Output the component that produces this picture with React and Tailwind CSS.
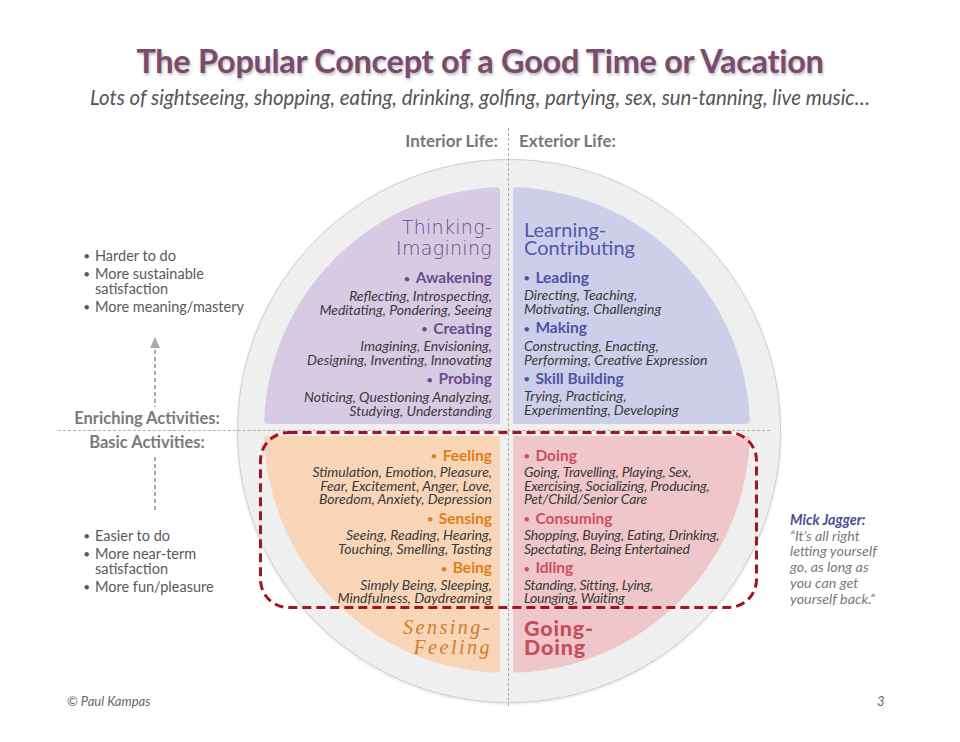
const descColor = "text-[#3a3a3a]";

function Item({ head, lines, color, first, tight, narrow }) {
  const headGap = first ? "" : tight ? "mt-[4px]" : "mt-[3px]";
  return (
    <>
      <div className={`text-[15.5px] leading-[17px] font-bold ${color} ${headGap}`}>
        <span className="text-[9px] align-middle mr-[6px] relative -top-[1px]">●</span>
        {head}
      </div>
      <div
        className={`text-[14px] italic ${descColor} ${tight ? "leading-[13.5px]" : "leading-[14px] mt-[1px]"} ${narrow ? "tracking-[-0.2px]" : ""}`}
      >
        {lines.map((l) => (
          <div key={l}>{l}</div>
        ))}
      </div>
    </>
  );
}

function Bullets({ items }) {
  return (
    <ul className="text-[14.5px] leading-[15px] text-[#595959] space-y-[3px]">
      {items.map((it) => (
        <li key={it[0]} className="flex">
          <span className="w-[11px] shrink-0 text-[9px] leading-[15px]">●</span>
          <span>
            {it.map((l) => (
              <div key={l}>{l}</div>
            ))}
          </span>
        </li>
      ))}
    </ul>
  );
}

export default function App() {
  return (
    <div className="relative w-[960px] h-[742px] bg-white overflow-hidden font-['Lato',sans-serif]">
      {/* heading */}
      <div className="pt-[41px] text-center">
        <h1 className="text-[32.5px] leading-[40px] font-bold text-[#7b4b6e] tracking-[-0.3px] [text-shadow:1px_2px_3px_rgba(0,0,0,0.28)]">
          The Popular Concept of a Good Time or Vacation
        </h1>
        <p className="mt-[3px] text-[20.4px] leading-[26px] italic text-[#555]">
          Lots of sightseeing, shopping, eating, drinking, golfing, partying, sex, sun-tanning, live music…
        </p>
      </div>

      {/* diagram canvas */}
      <div className="absolute inset-0">
        {/* outer ring */}
        <div className="absolute left-[237px] top-[159px] w-[544px] h-[544px] rounded-full bg-[#efefef] border-[1.5px] border-[#d0d0d0] shadow-[0_1px_3px_rgba(0,0,0,0.12)]" />

        {/* axis lines */}
        <div className="absolute left-[58px] top-[430px] w-[712px] border-t border-dashed border-[#b0b0b0]" />
        <div className="absolute left-[508px] top-[128px] h-[578px] border-l border-dashed border-[#a8a8a8]" />

        {/* quadrants */}
        <div className="absolute left-[264px] top-[187px] w-[486px] h-[486px] rounded-full overflow-hidden grid grid-cols-[236px_237px] grid-rows-[237px_237px] gap-x-[13px] gap-y-[12px]">
          <div className="bg-[#d6cbe3] rounded-tr-[4px] rounded-bl-[4px] flex flex-col items-end text-right pr-[8px] pt-[30px]">
            <div className="font-['DejaVu_Sans',sans-serif] font-extralight text-[19px] leading-[21px] text-[#6a4c8c] tracking-[0.3px]">
              <div>Thinking-</div>
              <div>Imagining</div>
            </div>
            <div className="mt-[10px]" />
            <Item first color="text-[#6b4b8f]" head="Awakening" lines={["Reflecting, Introspecting,", "Meditating, Pondering, Seeing"]} />
            <Item color="text-[#6b4b8f]" head="Creating" lines={["Imagining, Envisioning,", "Designing, Inventing, Innovating"]} />
            <Item color="text-[#6b4b8f]" head="Probing" lines={["Noticing, Questioning Analyzing,", "Studying, Understanding"]} />
          </div>

          <div className="bg-[#cdcfea] rounded-tl-[4px] rounded-br-[4px] flex flex-col pl-[11px] pt-[33px]">
            <div className="text-[20px] leading-[18px] text-[#5457a8]">
              <div>Learning-</div>
              <div>Contributing</div>
            </div>
            <div className="mt-[12.5px]" />
            <Item first color="text-[#4f52a6]" head="Leading" lines={["Directing, Teaching,", "Motivating, Challenging"]} />
            <Item color="text-[#4f52a6]" head="Making" lines={["Constructing, Enacting,", "Performing, Creative Expression"]} />
            <Item color="text-[#4f52a6]" head="Skill Building" lines={["Trying, Practicing,", "Experimenting, Developing"]} />
          </div>

          <div className="bg-[#f7d5b6] rounded-br-[4px] rounded-tl-[4px] flex flex-col items-end text-right pr-[8px] pt-[10.5px]">
            <Item first tight color="text-[#e07e18]" head="Feeling" lines={["Stimulation, Emotion, Pleasure,", "Fear, Excitement, Anger, Love,", "Boredom, Anxiety, Depression"]} />
            <Item tight color="text-[#e07e18]" head="Sensing" lines={["Seeing, Reading, Hearing,", "Touching, Smelling, Tasting"]} />
            <Item tight color="text-[#e07e18]" head="Being" lines={["Simply Being, Sleeping,", "Mindfulness, Daydreaming"]} />
            <div className="mt-[12px] font-['Liberation_Serif',serif] italic text-[20px] leading-[20px] tracking-[2.5px] text-[#d27c2c]">
              <div>Sensing-</div>
              <div>Feeling</div>
            </div>
          </div>

          <div className="bg-[#efc6ca] rounded-bl-[4px] rounded-tr-[4px] flex flex-col pl-[11px] pt-[10.5px]">
            <Item first tight narrow color="text-[#cc4f5e]" head="Doing" lines={["Going, Travelling, Playing, Sex,", "Exercising, Socializing, Producing,", "Pet/Child/Senior Care"]} />
            <Item tight narrow color="text-[#cc4f5e]" head="Consuming" lines={["Shopping, Buying, Eating, Drinking,", "Spectating, Being Entertained"]} />
            <Item tight narrow color="text-[#cc4f5e]" head="Idling" lines={["Standing, Sitting, Lying,", "Lounging, Waiting"]} />
            <div className="mt-[14px] text-[21.5px] leading-[19.5px] font-black tracking-[0.8px] text-[#c64e5a]">
              <div>Going-</div>
              <div>Doing</div>
            </div>
          </div>
        </div>

        {/* red dashed highlight */}
        <svg className="absolute left-[259px] top-[431px]" width="499" height="178" viewBox="0 0 499 178">
          <rect x="1.5" y="1.5" width="496" height="175" rx="28" fill="none" stroke="#a3161f" strokeWidth="3" strokeDasharray="9 5" />
        </svg>

        {/* column labels */}
        <div className="absolute left-[340px] w-[158px] top-[131px] text-right text-[17px] leading-[20px] font-bold text-[#777]">
          Interior Life:
        </div>
        <div className="absolute left-[519px] top-[131px] text-[17px] leading-[20px] font-bold text-[#777]">
          Exterior Life:
        </div>

        {/* left notes */}
        <div className="absolute left-[84px] top-[248px]">
          <Bullets items={[["Harder to do"], ["More sustainable", "satisfaction"], ["More meaning/mastery"]]} />
        </div>

        <svg className="absolute left-[149px] top-[337px]" width="12" height="70" viewBox="0 0 12 70">
          <polygon points="6,0 11,11 1,11" fill="#a9a9a9" />
          <line x1="6" y1="13" x2="6" y2="70" stroke="#a9a9a9" strokeWidth="2" strokeDasharray="4 3" />
        </svg>

        <div className="absolute left-[40px] w-[220px] top-[408px] text-center text-[16.5px] leading-[20px] font-bold text-[#7a7a7a]">
          <div className="pr-[6px]">Enriching Activities:</div>
          <div className="mt-[4px] pr-[6px]">Basic Activities:</div>
        </div>

        <svg className="absolute left-[149px] top-[457px]" width="12" height="54" viewBox="0 0 12 54">
          <line x1="6" y1="0" x2="6" y2="54" stroke="#a9a9a9" strokeWidth="2" strokeDasharray="4 3" />
        </svg>

        <div className="absolute left-[84px] top-[528px]">
          <Bullets items={[["Easier to do"], ["More near-term", "satisfaction"], ["More fun/pleasure"]]} />
        </div>

        {/* quote */}
        <div className="absolute left-[790px] top-[512px] text-[14.3px] leading-[15.7px] italic text-[#7a7a7a]">
          <div className="font-bold text-[#4d4f95]">Mick Jagger:</div>
          <div>“It’s all right</div>
          <div>letting yourself</div>
          <div>go, as long as</div>
          <div>you can get</div>
          <div>yourself back.”</div>
        </div>

        {/* footer */}
        <div className="absolute left-[67px] top-[693px] text-[13px] leading-[16px] italic text-[#666]">© Paul Kampas</div>
        <div className="absolute left-[877px] top-[693px] text-[13px] leading-[16px] italic text-[#666]">3</div>
      </div>
    </div>
  );
}
